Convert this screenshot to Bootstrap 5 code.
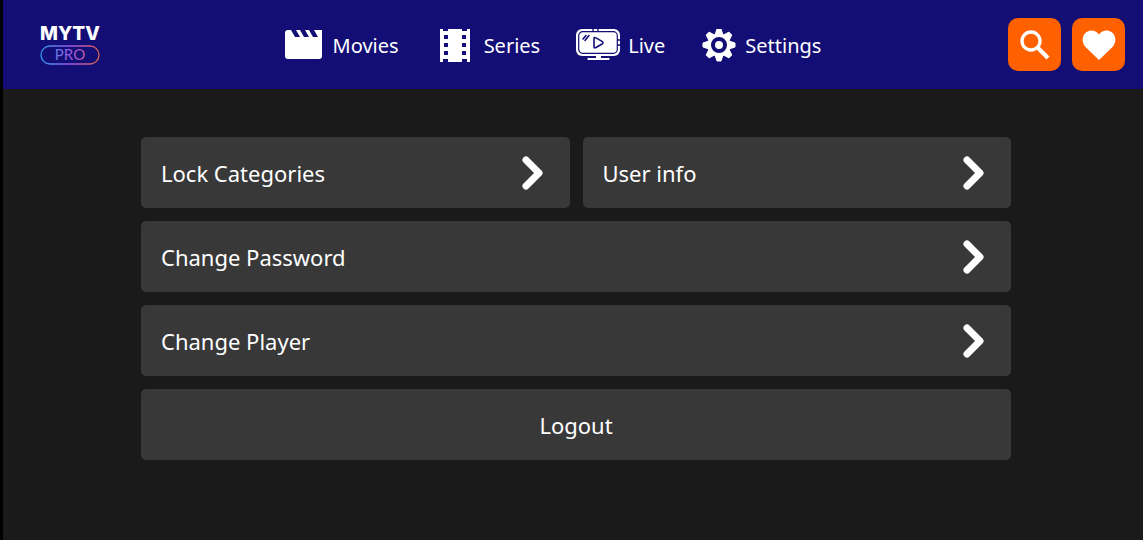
<!DOCTYPE html>
<html lang="en">
<head>
<meta charset="utf-8">
<meta name="viewport" content="width=device-width, initial-scale=1">
<title>MYTV PRO - Settings</title>
<link href="https://cdn.jsdelivr.net/npm/bootstrap@5.3.0/dist/css/bootstrap.min.css" rel="stylesheet">
<style>
  body { background: #1a1a1a; border-left: 3px solid #000; color: #fff; font-family: "Noto Sans", "Open Sans", sans-serif; }
  .topbar { background: #130e75; min-height: 89px; padding: 0 18px 0 37px; }
  .menu { gap: 36px; padding-right: 4px; }
  .menu a { color: #fff; font-size: 20px; line-height: 32px; gap: 8px; padding-top: 2px; }
  .tools { gap: 11px; }
  .tool { width: 53px; height: 53px; background: #ff6000; border-radius: 10px; }
  .tool:hover { background: #e65600; }
  .panel { padding: 48px 132px 48px 138px; }
  .tiles { gap: 13px; grid-template-columns: 1fr 1fr; }
  .tile { min-height: 71px; padding: 0 26px 0 20px; background: #383838; color: #fff; border: 0; border-radius: 5px; font-size: 22px; line-height: 32px; }
  .tile:hover { background: #444; color: #fff; }
  .tile.justify-content-center { padding-right: 20px; }
  .wide { grid-column: 1 / -1; }
  @media (max-width: 900px) {
    .panel { padding: 24px; }
    .topbar { flex-wrap: wrap; gap: 12px; }
    .menu { flex-wrap: wrap; }
  }
</style>
</head>
<body class="min-vh-100">
<svg width="0" height="0" class="position-absolute" aria-hidden="true">
  <symbol id="chevron" viewBox="0 0 22 34"><path d="M4 4 17 17 4 30" fill="none" stroke="#fff" stroke-width="7" stroke-linecap="round" stroke-linejoin="round"/></symbol>
</svg>

<header class="topbar d-flex align-items-center justify-content-between">
  <a href="#" class="d-flex" aria-label="MYTV PRO">
    <svg width="62" height="52" viewBox="0 -6 62 52">
      <defs><linearGradient id="glow" gradientUnits="userSpaceOnUse" x1="0" y1="0" x2="60" y2="0">
        <stop offset="0" stop-color="#2f9df0"/><stop offset=".5" stop-color="#9a58ea"/><stop offset="1" stop-color="#e0604c"/>
      </linearGradient></defs>
      <text x="0" y="15" fill="#fff" font-family="Inter, sans-serif" font-weight="800" font-size="19">MYTV</text>
      <rect x="1" y="21" width="58" height="18" rx="9" fill="none" stroke="url(#glow)" stroke-width="1.3"/>
      <text x="30" y="35" text-anchor="middle" fill="url(#glow)" font-family="Lato, sans-serif" font-size="15">PRO</text>
    </svg>
  </a>

  <nav class="menu d-flex align-items-center">
    <a href="#" class="d-flex align-items-center text-decoration-none">
      <svg width="40" height="34" viewBox="0 0 40 34" fill="#fff"><path d="M3 1h3l4 7h5l-4-7h4l4 7h5l-4-7h4l4 7h5l-4-7h8v26a3 3 0 0 1-3 3H3a3 3 0 0 1-3-3V4a3 3 0 0 1 3-3z"/></svg>
      Movies</a>
    <a href="#" class="d-flex align-items-center text-decoration-none">
      <svg width="41" height="34" viewBox="-5 1 41 34"><path fill="#fff" fill-rule="evenodd" d="M0 0h3v3h5V0h14v3h5V0h3v34h-3v-3h-5v3H8v-3H3v3H0zM4 7v4h4V7zm0 8v4h4v-4zm0 8v4h4v-4zM22 7v4h4V7zm0 8v4h4v-4zm0 8v4h4v-4z"/></svg>
      Series</a>
    <a href="#" class="d-flex align-items-center text-decoration-none">
      <svg width="44" height="34" viewBox="0 1 44 34">
        <rect y="1" width="44" height="27" rx="6" fill="#fff"/>
        <rect x="2.7" y="3.7" width="38.6" height="21.6" rx="4" fill="none" stroke="#130e75" stroke-width="1.2"/>
        <path d="M17 0v3M22 0v3M41 12h3M41 17h3" stroke="#130e75" stroke-width="1.3"/>
        <path d="M18 10.5v8q0 2 2 1l6-3.500q2-1.3 0-2.6l-6-3.500q-2-1-2 .6zM7 11l3-3.500M9 12.500l4-5" fill="none" stroke="#130e75" stroke-width="1.6" stroke-linecap="round"/>
        <path d="M20 28h5v2h-5zM13 30h19a1 1 0 0 1 1 2H12a1 1 0 0 1 1-2z" fill="#fff"/>
      </svg>
      Live</a>
    <a href="#" class="d-flex align-items-center text-decoration-none">
      <svg width="36" height="34" viewBox="0 1 36 34"><g transform="translate(18 17)">
        <g fill="#fff" stroke="#fff" stroke-linejoin="round"><g id="teeth"><path id="tooth" d="M-4-10-2-16h4L4-10V10L2 16h-4L-4 10z"/><use href="#tooth" transform="rotate(90)"/></g><use href="#teeth" transform="rotate(45)"/><circle r="11"/></g>
        <circle r="6" fill="#fff" stroke="#130e75" stroke-width="4"/></g></svg>
      Settings</a>
  </nav>

  <div class="tools d-flex">
    <button type="button" class="tool btn border-0 p-0 d-flex align-items-center justify-content-center" aria-label="Search">
      <svg width="32" height="32" viewBox="0 0 32 32" fill="none" stroke="#fff"><circle cx="12" cy="12" r="9" stroke-width="3.3"/><path d="m18 18 11 11" stroke-width="4"/></svg>
    </button>
    <button type="button" class="tool btn border-0 p-0 d-flex align-items-center justify-content-center" aria-label="Favorites">
      <svg width="34" height="32" viewBox="0 0 34 32"><path fill="#fff" d="M17 31 4 18.500C-1 13.500 0 6 4.500 3 9 0 14 1.500 17 5.500 20 1.500 25 0 29.500 3 34 6 35 13.500 30 18.500z"/></svg>
    </button>
  </div>
</header>

<main class="panel">
  <div class="tiles d-grid">
    <button type="button" class="tile btn d-flex align-items-center justify-content-between">Lock Categories <svg width="22" height="34"><use href="#chevron"/></svg></button>
    <button type="button" class="tile btn d-flex align-items-center justify-content-between">User info <svg width="22" height="34"><use href="#chevron"/></svg></button>
    <button type="button" class="tile wide btn d-flex align-items-center justify-content-between">Change Password <svg width="22" height="34"><use href="#chevron"/></svg></button>
    <button type="button" class="tile wide btn d-flex align-items-center justify-content-between">Change Player <svg width="22" height="34"><use href="#chevron"/></svg></button>
    <button type="button" class="tile wide btn d-flex align-items-center justify-content-center">Logout</button>
  </div>
</main>
<script src="https://cdn.jsdelivr.net/npm/bootstrap@5.3.0/dist/js/bootstrap.bundle.min.js"></script>
</body>
</html>
